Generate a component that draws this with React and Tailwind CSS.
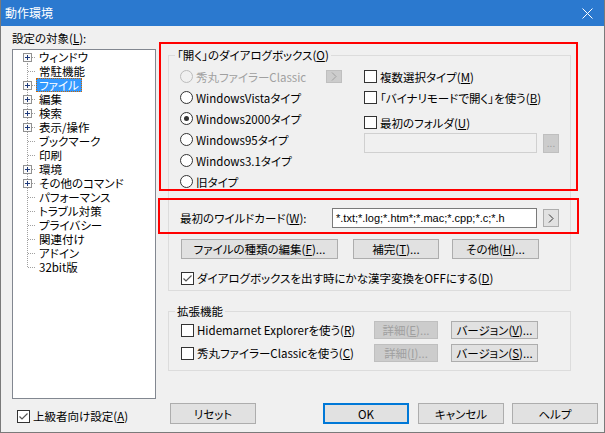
import React from "react";

const F = "font-['Noto_Sans_CJK_JP',sans-serif] [font-feature-settings:'palt']";

function U({ children }) {
  return <u className="underline underline-offset-[1px] decoration-1">{children}</u>;
}

function Radio({ checked, disabled }) {
  return (
    <span
      className={`w-[13px] h-[13px] rounded-full border shrink-0 flex items-center justify-center ${
        disabled ? "border-[#bcbcbc] bg-[#f0f0f0]" : "border-[#333333] bg-white"
      }`}
    >
      {checked && <span className="w-[5px] h-[5px] rounded-full bg-[#333333]" />}
    </span>
  );
}

function Check({ checked }) {
  return (
    <span className="w-[13px] h-[13px] border border-[#333333] bg-white shrink-0 flex items-center justify-center">
      {checked && (
        <svg width="11" height="11" viewBox="0 0 11 11">
          <path d="M1.5 5.5 L4 8 L9.5 2.5" fill="none" stroke="#555555" strokeWidth="1.2" />
        </svg>
      )}
    </span>
  );
}

function Btn({ children, className = "", disabled, focused }) {
  let c = "bg-[#e1e1e1] border border-[#adadad] text-black";
  if (disabled) c = "bg-[#cccccc] border border-[#bfbfbf] text-[#a0a0a0]";
  if (focused) c = "bg-[#e1e1e1] border-2 border-[#0078d7] text-black";
  return (
    <div className={`shrink-0 flex items-center justify-center leading-[14px] whitespace-nowrap ${c} ${className}`}>
      {children}
    </div>
  );
}

function Chevron({ color }) {
  return (
    <svg width="6" height="9" viewBox="0 0 6 9">
      <polyline points="1,0.5 5,4.5 1,8.5" fill="none" stroke={color} strokeWidth="1" />
    </svg>
  );
}

const treeItems = [
  ["ウィンドウ", true],
  ["常駐機能", false],
  ["ファイル", true, true],
  ["編集", true],
  ["検索", true],
  ["表示/操作", true],
  ["ブックマーク", false],
  ["印刷", false],
  ["環境", true],
  ["その他のコマンド", true],
  ["パフォーマンス", false],
  ["トラブル対策", false],
  ["プライバシー", false],
  ["関連付け", false],
  ["アドイン", false],
  ["32bit版", false],
];

function TreeRow({ label, plus, selected, first, last }) {
  return (
    <div className="flex h-[14px] items-center overflow-visible">
      <svg width="23" height="14" viewBox="0 0 23 14" className="shrink-0">
        <line
          x1="14.5"
          y1={first ? 7 : 0}
          x2="14.5"
          y2={last ? 8 : 14}
          stroke="#a0a0a0"
          strokeDasharray="1 1"
        />
        <line x1={plus ? 19 : 15} y1="7.5" x2="23" y2="7.5" stroke="#a0a0a0" strokeDasharray="1 1" />
        {plus && (
          <g>
            <rect x="10.5" y="3.5" width="8" height="8" fill="#fbfbfb" stroke="#919191" />
            <line x1="12" y1="7.5" x2="17" y2="7.5" stroke="#1e3a7b" />
            <line x1="14.5" y1="5" x2="14.5" y2="10" stroke="#1e3a7b" />
          </g>
        )}
      </svg>
      <span
        className={`h-[14px] leading-[12px] px-[2px] whitespace-nowrap border ${
          selected ? "bg-[#3399ff] text-white border-dotted border-[#cc6600]" : "border-transparent"
        }`}
      >
        {label}
      </span>
    </div>
  );
}

export default function App() {
  return (
    <div
      className={`relative w-[605px] h-[433px] bg-[#f0f0f0] border-x border-b border-[#7a7a7a] ${F} text-[11.5px] leading-[14px] text-black flex flex-col overflow-hidden`}
    >
      {/* Title bar */}
      <div className="h-[26px] shrink-0 bg-[#2b79cf] flex items-center justify-between pl-[4px] pr-[11px] text-white text-[12px]">
        <span>動作環境</span>
        <svg width="11" height="11" viewBox="0 0 11 11">
          <line x1="0.5" y1="0.5" x2="10.5" y2="10.5" stroke="white" strokeWidth="1" />
          <line x1="10.5" y1="0.5" x2="0.5" y2="10.5" stroke="white" strokeWidth="1" />
        </svg>
      </div>

      <div className="flex flex-1">
        {/* Left column */}
        <div className="ml-[11px] w-[144px] flex flex-col shrink-0">
          <div className="mt-[5px] h-[14px] whitespace-nowrap">
            設定の対象(<U>L</U>):
          </div>
          <div className="mt-[4px] h-[350px] border border-[#828790] bg-white flex flex-col">
            {treeItems.map(([label, plus, sel], i) => (
              <TreeRow
                key={label}
                label={label}
                plus={plus}
                selected={sel}
                first={i === 0}
                last={i === treeItems.length - 1}
              />
            ))}
          </div>
          <div className="mt-[10px] h-[14px] ml-[5px] flex items-center gap-[3px] whitespace-nowrap">
            <Check checked />
            <span>
              上級者向け設定(<U>A</U>)
            </span>
          </div>
        </div>

        {/* Right column */}
        <div className="ml-[12px] w-[430px] flex flex-col items-start shrink-0">
          {/* Group 1 */}
          <fieldset className="mt-[22px] w-[403px] border border-[#dcdcdc] flex flex-col">
            <legend className="ml-[6px] px-[2px] leading-[14px] whitespace-nowrap">
              「開く」のダイアログボックス(<U>O</U>)
            </legend>
            <div className="pt-[4px] flex">
              <div className="w-[195px] pl-[11px] flex flex-col shrink-0">
                <div className="h-[21px] flex items-center gap-[3px]">
                  <Radio disabled />
                  <span className="w-[127px] text-[#a0a0a0] whitespace-nowrap">秀丸ファイラーClassic</span>
                  <Btn disabled className="w-[16px] h-[13px]">
                    <Chevron color="#a0a0a0" />
                  </Btn>
                </div>
                <div className="h-[21px] flex items-center gap-[3px] whitespace-nowrap">
                  <Radio />
                  <span>WindowsVistaタイプ</span>
                </div>
                <div className="h-[21px] flex items-center gap-[3px] whitespace-nowrap">
                  <Radio checked />
                  <span>Windows2000タイプ</span>
                </div>
                <div className="h-[21px] flex items-center gap-[3px] whitespace-nowrap">
                  <Radio />
                  <span>Windows95タイプ</span>
                </div>
                <div className="h-[21px] flex items-center gap-[3px] whitespace-nowrap">
                  <Radio />
                  <span>Windows3.1タイプ</span>
                </div>
                <div className="h-[21px] flex items-center gap-[3px] whitespace-nowrap">
                  <Radio />
                  <span>旧タイプ</span>
                </div>
              </div>
              <div className="flex flex-col">
                <div className="h-[21px] flex items-center gap-[3px] whitespace-nowrap">
                  <Check />
                  <span>
                    複数選択タイプ(<U>M</U>)
                  </span>
                </div>
                <div className="h-[21px] flex items-center gap-[3px] whitespace-nowrap">
                  <Check />
                  <span>
                    「バイナリモードで開く」を使う(<U>B</U>)
                  </span>
                </div>
                <div className="mt-[4px] h-[21px] flex items-center gap-[3px] whitespace-nowrap">
                  <Check />
                  <span>
                    最初のフォルダ(<U>U</U>)
                  </span>
                </div>
                <div className="h-[20px] flex items-center">
                  <div className="w-[173px] h-[20px] border border-[#d0d0d0] bg-[#f0f0f0]" />
                  <Btn disabled className="ml-[6px] w-[16px] h-[19px] text-[10px]">
                    ...
                  </Btn>
                </div>
              </div>
            </div>

            {/* Wildcard row */}
            <div className="mt-[16px] h-[20px] pl-[11px] flex items-center">
              <span className="w-[152px] whitespace-nowrap">
                最初のワイルドカード(<U>W</U>):
              </span>
              <div className="w-[205px] h-[20px] border border-[#7a7a7a] bg-white pl-[3px] flex items-center whitespace-nowrap overflow-hidden font-['Liberation_Sans',sans-serif] text-[11px]">
                *.txt;*.log;*.htm*;*.mac;*.cpp;*.c;*.h
              </div>
              <Btn className="ml-[6px] w-[16px] h-[18px]">
                <Chevron color="#333333" />
              </Btn>
            </div>

            {/* Buttons row */}
            <div className="mt-[11px] h-[20px] pl-[12px] flex items-center">
              <Btn className="w-[157px] h-[20px]">
                ファイルの種類の編集(<U>F</U>)...
              </Btn>
              <Btn className="ml-[15px] w-[86px] h-[20px]">
                補完(<U>T</U>)...
              </Btn>
              <Btn className="ml-[13px] w-[87px] h-[20px]">
                その他(<U>H</U>)...
              </Btn>
            </div>

            <div className="mt-[9px] mb-[2px] h-[20px] pl-[12px] flex items-center gap-[3px] whitespace-nowrap">
              <Check checked />
              <span>
                ダイアログボックスを出す時にかな漢字変換をOFFにする(<U>D</U>)
              </span>
            </div>
          </fieldset>

          {/* Group 2 */}
          <fieldset className="mt-[13px] w-[403px] border border-[#dcdcdc] flex flex-col">
            <legend className="ml-[6px] px-[2px] leading-[14px] whitespace-nowrap">拡張機能</legend>
            <div className="mt-[3px] h-[18px] pl-[12px] flex items-center">
              <div className="w-[193px] flex items-center gap-[3px] whitespace-nowrap">
                <Check />
                <span>
                  Hidemarnet Explorerを使う(<U>R</U>)
                </span>
              </div>
              <Btn disabled className="w-[64px] h-[18px]">
                詳細(<U>E</U>)...
              </Btn>
              <Btn className="ml-[13px] w-[87px] h-[18px]">
                バージョン(<U>V</U>)...
              </Btn>
            </div>
            <div className="mt-[5px] mb-[8px] h-[18px] pl-[12px] flex items-center">
              <div className="w-[193px] flex items-center gap-[3px] whitespace-nowrap">
                <Check />
                <span>
                  秀丸ファイラーClassicを使う(<U>C</U>)
                </span>
              </div>
              <Btn disabled className="w-[64px] h-[18px]">
                詳細(<U>I</U>)...
              </Btn>
              <Btn className="ml-[13px] w-[87px] h-[18px]">
                バージョン(<U>S</U>)...
              </Btn>
            </div>
          </fieldset>

          {/* Bottom buttons */}
          <div className="mt-[32px] h-[21px] flex items-center">
            <Btn className="ml-[2px] w-[86px] h-[21px]">リセット</Btn>
            <Btn focused className="ml-[67px] w-[86px] h-[21px]">
              OK
            </Btn>
            <Btn className="ml-[9px] w-[86px] h-[21px]">キャンセル</Btn>
            <Btn className="ml-[8px] w-[86px] h-[21px]">ヘルプ</Btn>
          </div>
        </div>
      </div>

      {/* Red annotation overlays */}
      <div className="absolute left-[158px] top-[42px] w-[419px] h-[149px] border-2 border-[#ff0000] pointer-events-none" />
      <div className="absolute left-[157px] top-[198px] w-[421px] h-[36px] border-2 border-[#ff0000] pointer-events-none" />
    </div>
  );
}
